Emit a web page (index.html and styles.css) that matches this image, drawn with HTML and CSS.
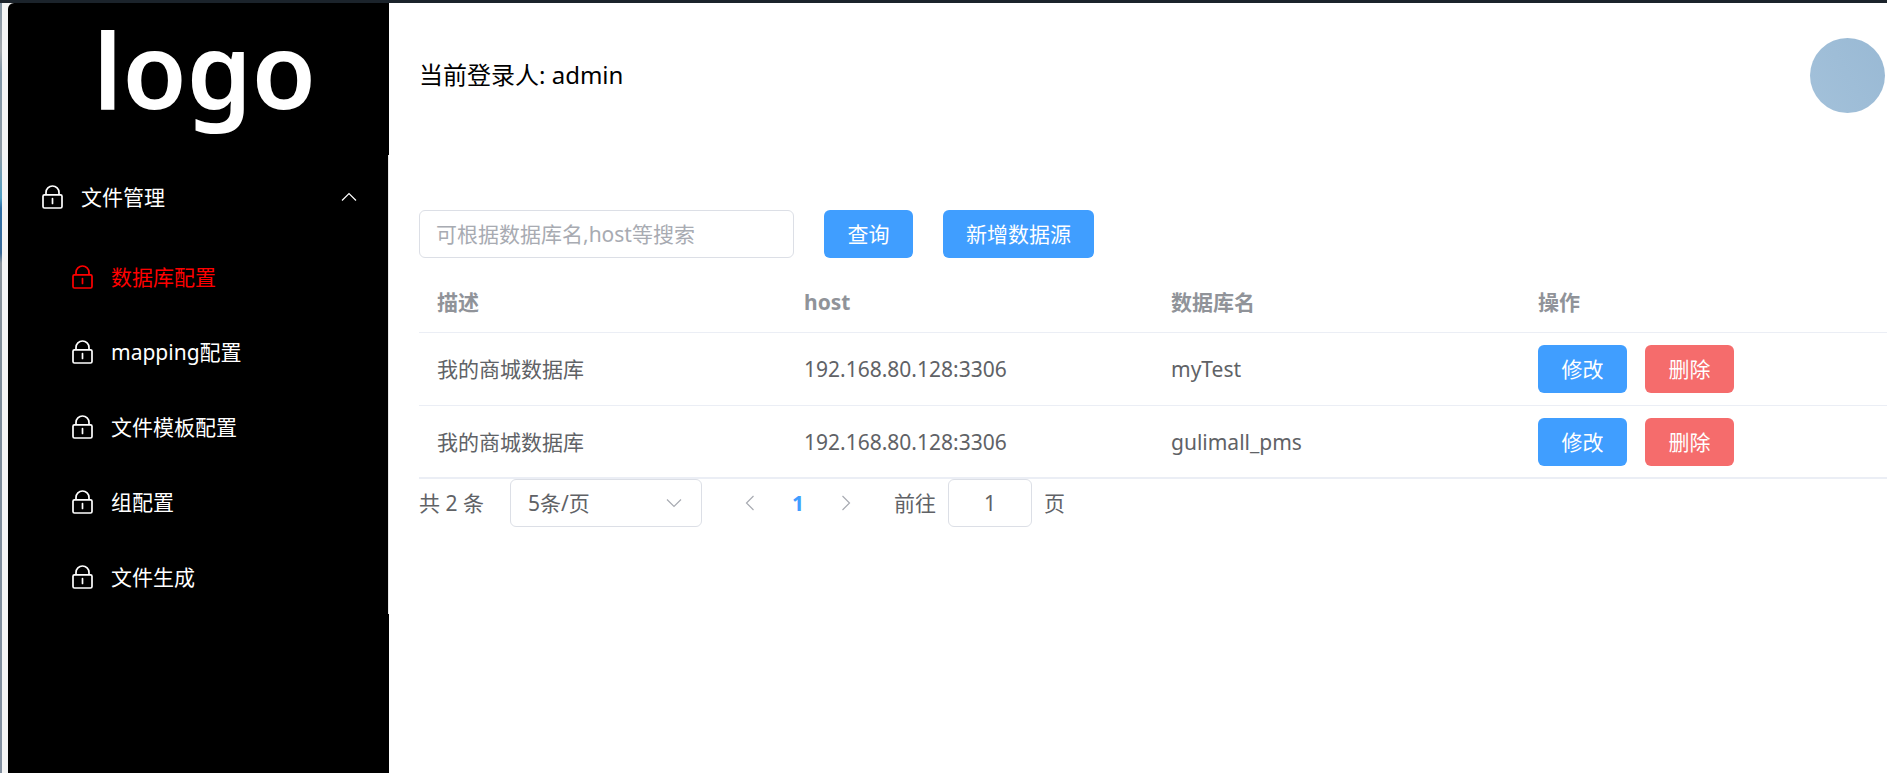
FILE: index.html
```html
<!DOCTYPE html>
<html lang="zh-CN">
<head>
<meta charset="utf-8">
<title>数据库配置</title>
<link rel="stylesheet" href="styles.css">
</head>
<body>
<svg class="defs" aria-hidden="true">
  <symbol id="lock" viewBox="0 0 21 24"><path d="M4 9V7.500A6.500 6.500 0 0 1 17 7.500V9M2.500 9.800H18.500Q20 9.800 20 11.300V21.500Q20 23 18.500 23H2.500Q1 23 1 21.500V11.300Q1 9.800 2.500 9.800ZM10.500 13.500V18.500" fill="none" stroke="currentColor" stroke-width="1.700" stroke-linecap="round"/></symbol>
  <symbol id="chevron" viewBox="0 0 16 16"><path d="M1 4.500 8 11.500 15 4.500" fill="none" stroke="currentColor" stroke-width="1.200"/></symbol>
</svg>
<div class="window">
  <aside class="sidebar">
    <div class="logo">logo</div>
    <nav class="menu">
      <button class="menu-title" type="button" aria-expanded="true"><svg class="lock"><use href="#lock"/></svg><span>文件管理</span><svg class="chevron up"><use href="#chevron"/></svg></button>
      <a class="menu-item active" href="#"><svg class="lock"><use href="#lock"/></svg>数据库配置</a>
      <a class="menu-item" href="#"><svg class="lock"><use href="#lock"/></svg>mapping配置</a>
      <a class="menu-item" href="#"><svg class="lock"><use href="#lock"/></svg>文件模板配置</a>
      <a class="menu-item" href="#"><svg class="lock"><use href="#lock"/></svg>组配置</a>
      <a class="menu-item" href="#"><svg class="lock"><use href="#lock"/></svg>文件生成</a>
    </nav>
  </aside>
  <main class="main">
    <header class="header"><span>当前登录人: admin</span><div class="avatar"></div></header>
    <form class="search">
      <input class="field" type="text" aria-label="搜索" placeholder="可根据数据库名,host等搜索">
      <button class="btn" type="button">查询</button>
      <button class="btn" type="button">新增数据源</button>
    </form>
    <table class="table">
      <thead><tr><th>描述</th><th>host</th><th>数据库名</th><th>操作</th></tr></thead>
      <tbody>
        <tr><td>我的商城数据库</td><td>192.168.80.128:3306</td><td>myTest</td><td><div class="actions"><button class="btn" type="button">修改</button><button class="btn danger" type="button">删除</button></div></td></tr>
        <tr><td>我的商城数据库</td><td>192.168.80.128:3306</td><td>gulimall_pms</td><td><div class="actions"><button class="btn" type="button">修改</button><button class="btn danger" type="button">删除</button></div></td></tr>
      </tbody>
    </table>
    <div class="pagination">
      <span class="total">共 2 条</span>
      <div class="size"><select class="field" aria-label="每页条数"><option>5条/页</option></select><svg class="chevron"><use href="#chevron"/></svg></div>
      <div class="pager">
        <button type="button" aria-label="上一页" disabled><svg class="chevron left"><use href="#chevron"/></svg></button>
        <button class="current" type="button">1</button>
        <button type="button" aria-label="下一页" disabled><svg class="chevron right"><use href="#chevron"/></svg></button>
      </div>
      <label class="jump">前往<input class="field" type="text" value="1">页</label>
    </div>
  </main>
</div>
</body>
</html>
```
FILE: styles.css
```css
* { box-sizing: border-box; }
body {
  margin: 0;
  font: 21px/34px "Noto Sans", "Noto Sans CJK SC", sans-serif;
  color: #606266;
  background: #fff;
}
button, input, select { font: inherit; color: inherit; margin: 0; }
button { border: 0; background: none; cursor: pointer; }
.defs { position: absolute; width: 0; height: 0; }

.window {
  display: flex;
  min-height: 100vh;
  padding-left: 8px;
  border-top: 3px solid #1b232b;
  background:
    linear-gradient(#8293a2, #a5a9ad 48px, #7f95a6 70px, #909ba4 150px, #4f9fc4 195px, #2f6fa6 205px, #3a6a98 250px, #8b949c 260px, #7c8b99 400px, #8390a0) left / 2px 100% no-repeat,
    linear-gradient(#f5f5f5, #f5f5f5) left / 12px 100% no-repeat,
    #fff;
}
.sidebar {
  width: 381px;
  flex: none;
  background: #000;
  color: #fff;
  border-top-left-radius: 6px;
}
.logo {
  height: 152px;
  padding-left: 12px;
  font-size: 104px;
  line-height: 132px;
  font-weight: 600;
  text-align: center;
}
.menu { border-right: 1px solid #e6e6e6; }
.menu-title, .menu-item {
  display: flex;
  align-items: center;
  gap: 18px;
  width: 100%;
  color: #fff;
  text-decoration: none;
}
.menu-title { height: 84px; padding: 0 31px 0 34px; }
.menu-title span { flex: 1; text-align: left; }
.menu-item { height: 75px; padding-left: 64px; }
.menu-item.active { color: #f00; }
.lock { width: 21px; height: 24px; flex: none; }
.chevron { width: 16px; height: 16px; display: block; }
.up { transform: rotate(180deg); }
.left { transform: rotate(90deg); }
.right { transform: rotate(-90deg); }

.main { flex: 1; min-width: 0; padding-left: 30px; }
.header {
  display: flex;
  align-items: center;
  justify-content: space-between;
  height: 144px;
  padding-right: 2px;
  font-size: 24px;
  color: #000;
}
.avatar {
  width: 75px;
  height: 75px;
  border-radius: 50%;
  background: linear-gradient(60deg, #a3c1da, #99b9d4);
}
.search { display: flex; gap: 30px; padding: 63px 0 12px; }
.field {
  height: 48px;
  padding: 0 16px;
  border: 1px solid #dcdfe6;
  border-radius: 6px;
  background: #fff;
  outline: 0;
}
.field::placeholder { color: #a8abb2; opacity: 1; }
.search .field { width: 375px; }
.btn {
  min-width: 89px;
  height: 48px;
  padding: 0 23px;
  border-radius: 6px;
  background: #409eff;
  color: #fff;
}
.danger { background: #f56c6c; }
.table {
  width: 100%;
  table-layout: fixed;
  border-collapse: separate;
  border-spacing: 0;
}
.table th, .table td {
  padding: 12px 18px;
  border-bottom: 1px solid #ebeef5;
  text-align: left;
}
.table th { padding: 15px 18px 13px; color: #909399; font-weight: 700; }
.table tr:last-child td { padding-bottom: 11px; border-bottom-width: 2px; }
.table thead tr th { border-bottom-width: 1px; }
.actions { display: flex; gap: 18px; }

.pagination { display: flex; align-items: center; }
.size { position: relative; width: 192px; margin-left: 26px; }
.size select { width: 100%; padding: 0 17px; appearance: none; }
.size .chevron { position: absolute; right: 20px; top: 16px; color: #a8abb2; }
.pager { display: flex; margin: 0 24px; }
.pager button {
  display: grid;
  place-items: center;
  width: 48px;
  height: 48px;
  padding: 0;
  color: #a8abb2;
}
.pager .current { color: #409eff; font-weight: 700; }
.jump { display: flex; align-items: center; gap: 12px; }
.jump .field { width: 84px; text-align: center; }
```
